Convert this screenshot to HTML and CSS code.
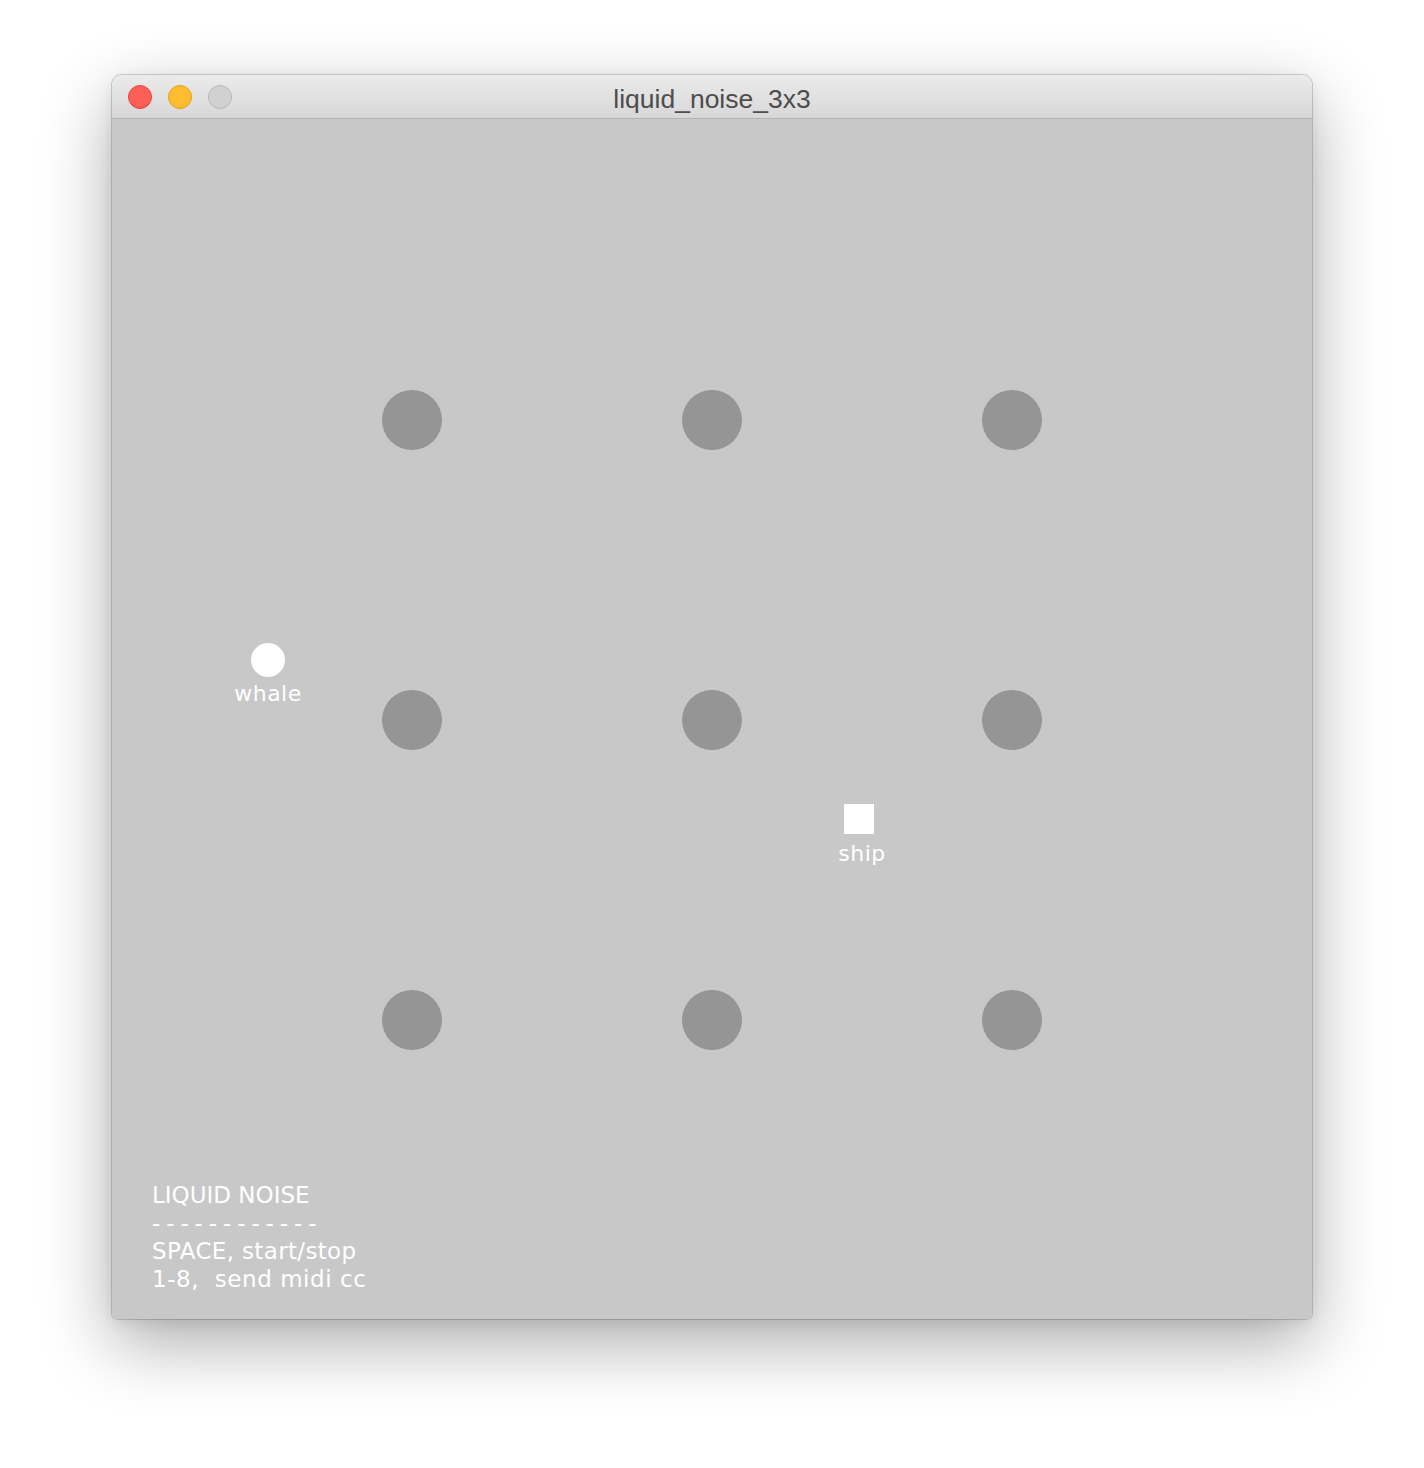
FILE: index.html
```html
<!DOCTYPE html>
<html>
<head>
<meta charset="utf-8">
<title>liquid_noise_3x3</title>
<link rel="stylesheet" href="styles.css">
</head>
<body>
<div class="window">
  <div class="titlebar">
    <div class="lights">
      <span class="light close"></span>
      <span class="light minimize"></span>
      <span class="light zoom"></span>
    </div>
    <div class="title">liquid_noise_3x3</div>
  </div>
  <div class="canvas">
    <div class="grid">
      <span class="dot"></span><span class="dot"></span><span class="dot"></span>
      <span class="dot"></span><span class="dot"></span><span class="dot"></span>
      <span class="dot"></span><span class="dot"></span><span class="dot"></span>
    </div>
    <div class="node whale">
      <span class="marker round"></span>
      <span class="label">whale</span>
    </div>
    <div class="node ship">
      <span class="marker square"></span>
      <span class="label ship-label">ship</span>
    </div>
    <div class="help">
      <div class="line heading">LIQUID NOISE</div>
      <div class="line dashes">------------</div>
      <div class="line">SPACE, start/stop</div>
      <div class="line wide">1-8,  send midi cc</div>
    </div>
  </div>
</div>
</body>
</html>
```

FILE: styles.css
```css
html, body {
  margin: 0;
  padding: 0;
  background: #ffffff;
}
body {
  padding: 75px 0 0 112px;
  height: 1468px;
  box-sizing: border-box;
}
.window {
  width: 1200px;
  border-radius: 10px 10px 6px 6px;
  overflow: hidden;
  box-shadow: 0 0 0 1px rgba(0,0,0,0.16), 0 24px 70px rgba(0,0,0,0.33), 0 4px 14px rgba(0,0,0,0.08);
}
.titlebar {
  position: relative;
  height: 44px;
  box-sizing: border-box;
  background: linear-gradient(#ebebeb, #d7d7d7);
  border-bottom: 1px solid #b2b2b2;
  display: flex;
  align-items: center;
  justify-content: center;
}
.lights {
  position: absolute;
  left: 16px;
  top: 10px;
  display: flex;
  gap: 16px;
}
.light {
  width: 24px;
  height: 24px;
  border-radius: 50%;
  box-sizing: border-box;
}
.close { background: #fe5f57; border: 1px solid #e2463f; }
.minimize { background: #febc2e; border: 1px solid #e1a116; }
.zoom { background: #d1d1d1; border: 1px solid #b8b8b8; }
.title {
  font-family: "Liberation Sans", Arial, sans-serif;
  font-size: 26.5px;
  color: #4d4d4d;
  margin-top: 5px;
}
.canvas {
  position: relative;
  height: 1200px;
  background: #c8c8c8;
  display: flex;
  flex-direction: column;
  font-family: "DejaVu Sans", "Noto Sans", sans-serif;
  color: #ffffff;
}
.grid {
  margin: 271px 0 0 270px;
  display: grid;
  grid-template-columns: repeat(3, 60px);
  grid-auto-rows: 60px;
  gap: 240px;
}
.dot {
  width: 60px;
  height: 60px;
  border-radius: 50%;
  background: #959595;
}
.node {
  position: absolute;
  width: 100px;
  display: flex;
  flex-direction: column;
  align-items: center;
}
.whale { left: 106px; top: 524px; }
.ship { left: 697px; top: 685px; }
.marker { background: #ffffff; }
.round { width: 34px; height: 34px; border-radius: 50%; }
.square { width: 30px; height: 30px; }
.label {
  font-size: 22px;
  line-height: 22px;
  margin-top: 6px;
  letter-spacing: 0.5px;
}
.ship-label { margin-top: 9px; margin-left: 6px; }
.help {
  margin-top: auto;
  padding: 0 0 26px 40px;
  font-size: 23px;
  line-height: 28px;
}
.line { white-space: pre; letter-spacing: 0.35px; }
.heading { letter-spacing: 0; }
.wide { letter-spacing: 0.55px; }
.dashes { letter-spacing: 5.9px; }
```
